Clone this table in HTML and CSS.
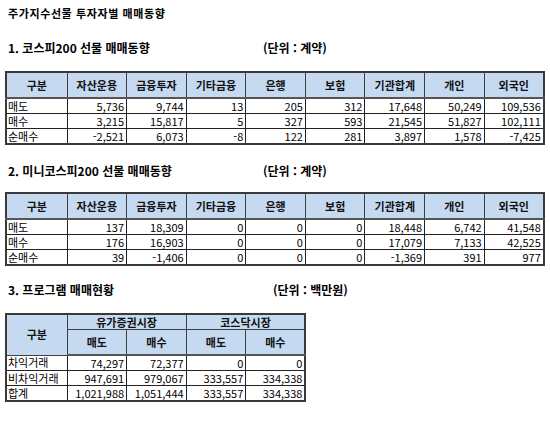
FILE: index.html
```html
<!DOCTYPE html>
<html lang="ko">
<head>
<meta charset="utf-8">
<link rel="stylesheet" href="styles.css">
</head>
<body>
<div class="page">
  <h1 class="main-title">주가지수선물 투자자별 매매동향</h1>

  <div class="section-head s1">
    <h2 class="section-title">1. 코스피200 선물 매매동향</h2>
    <span class="unit">(단위 : 계약)</span>
  </div>
  <table class="grid">
    <colgroup>
      <col class="c-first"><col class="c"><col class="c"><col class="c"><col class="c"><col class="c"><col class="c"><col class="c"><col class="c">
    </colgroup>
    <thead>
      <tr class="hrow"><th>구분</th><th>자산운용</th><th>금융투자</th><th>기타금융</th><th>은행</th><th>보험</th><th>기관합계</th><th>개인</th><th>외국인</th></tr>
    </thead>
    <tbody>
      <tr><td class="lbl">매도</td><td>5,736</td><td>9,744</td><td>13</td><td>205</td><td>312</td><td>17,648</td><td>50,249</td><td>109,536</td></tr>
      <tr><td class="lbl">매수</td><td>3,215</td><td>15,817</td><td>5</td><td>327</td><td>593</td><td>21,545</td><td>51,827</td><td>102,111</td></tr>
      <tr><td class="lbl">순매수</td><td>-2,521</td><td>6,073</td><td>-8</td><td>122</td><td>281</td><td>3,897</td><td>1,578</td><td>-7,425</td></tr>
    </tbody>
  </table>

  <div class="section-head s2">
    <h2 class="section-title">2. 미니코스피200 선물 매매동향</h2>
    <span class="unit">(단위 : 계약)</span>
  </div>
  <table class="grid">
    <colgroup>
      <col class="c-first"><col class="c"><col class="c"><col class="c"><col class="c"><col class="c"><col class="c"><col class="c"><col class="c">
    </colgroup>
    <thead>
      <tr class="hrow"><th>구분</th><th>자산운용</th><th>금융투자</th><th>기타금융</th><th>은행</th><th>보험</th><th>기관합계</th><th>개인</th><th>외국인</th></tr>
    </thead>
    <tbody>
      <tr><td class="lbl">매도</td><td>137</td><td>18,309</td><td>0</td><td>0</td><td>0</td><td>18,448</td><td>6,742</td><td>41,548</td></tr>
      <tr><td class="lbl">매수</td><td>176</td><td>16,903</td><td>0</td><td>0</td><td>0</td><td>17,079</td><td>7,133</td><td>42,525</td></tr>
      <tr><td class="lbl">순매수</td><td>39</td><td>-1,406</td><td>0</td><td>0</td><td>0</td><td>-1,369</td><td>391</td><td>977</td></tr>
    </tbody>
  </table>

  <div class="section-head s3">
    <h2 class="section-title wide">3. 프로그램 매매현황</h2>
    <span class="unit">(단위 : 백만원)</span>
  </div>
  <table class="grid">
    <colgroup>
      <col class="c-first"><col class="c"><col class="c"><col class="c"><col class="c">
    </colgroup>
    <thead>
      <tr class="hrow-top"><th rowspan="2" class="tall">구분</th><th colspan="2">유가증권시장</th><th colspan="2">코스닥시장</th></tr>
      <tr class="hrow"><th>매도</th><th>매수</th><th>매도</th><th>매수</th></tr>
    </thead>
    <tbody>
      <tr><td class="lbl">차익거래</td><td>74,297</td><td>72,377</td><td>0</td><td>0</td></tr>
      <tr><td class="lbl">비차익거래</td><td>947,691</td><td>979,067</td><td>333,557</td><td>334,338</td></tr>
      <tr><td class="lbl">합계</td><td>1,021,988</td><td>1,051,444</td><td>333,557</td><td>334,338</td></tr>
    </tbody>
  </table>
</div>
</body>
</html>
```

FILE: styles.css
```css
html, body {
  margin: 0;
  padding: 0;
  background: #ffffff;
}

.page {
  padding: 4px 0 0 5px;
  font-family: "Noto Sans CJK KR", "Noto Sans", sans-serif;
  color: #000;
}

.main-title {
  margin: 0 0 0 3px;
  font-size: 11px;
  font-weight: bold;
  letter-spacing: 0.6px;
  line-height: 18px;
  height: 18px;
}

.section-head {
  display: flex;
  align-items: center;
  height: 18px;
  padding-left: 3px;
}

.s1 { margin-top: 17px; margin-bottom: 14px; }
.s2 { margin-top: 17px; margin-bottom: 12px; }
.s3 { margin-top: 15px; margin-bottom: 14px; }

.section-title {
  margin: 0;
  width: 255px;
  font-size: 12px;
  font-weight: bold;
  line-height: 18px;
}

.section-title.wide { width: 265px; }

.unit {
  font-size: 12px;
  font-weight: bold;
  line-height: 18px;
}

.grid {
  border-collapse: collapse;
  table-layout: fixed;
  border: 2px solid #3a3a3a;
  font-size: 11px;
  line-height: 13px;
}

.grid .c-first { width: 61px; }
.grid .c { width: 59.6px; }

.grid th {
  background: #c5d9f1;
  font-weight: bold;
  text-align: center;
  border: 1px solid #404040;
  padding: 0;
  height: 24px;
  color: #111;
}

.grid .hrow th {
  border-bottom: 2px solid #555;
}

.grid .hrow-top th {
  height: 14px;
}

.grid td {
  border: 1px solid #222;
  padding: 0 2px 0 2px;
  height: 14px;
  text-align: right;
  white-space: nowrap;
}

.grid td.lbl {
  text-align: left;
  padding-left: 1px;
}
```
